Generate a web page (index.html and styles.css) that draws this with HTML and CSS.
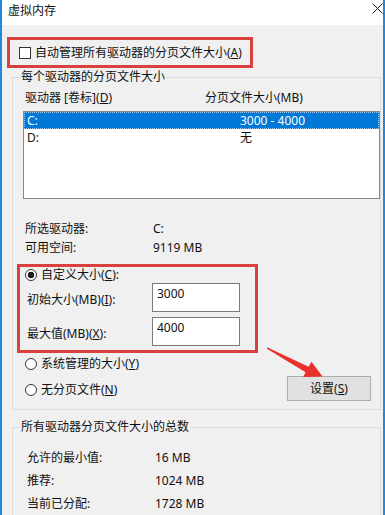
FILE: index.html
```html
<!DOCTYPE html>
<html lang="zh-CN">
<head>
<meta charset="utf-8">
<title>虚拟内存</title>
<link rel="stylesheet" href="styles.css">
</head>
<body>
<div class="window">
  <div class="titlebar">
    <span class="title">虚拟内存</span>
    <svg class="close" width="11" height="11" viewBox="0 0 11 11"><path d="M0.5 0.5L10.5 10.5M10.5 0.5L0.5 10.5" stroke="#1a1a1a" stroke-width="1" fill="none"/></svg>
  </div>
  <div class="body">
    <div class="auto-box">
      <span class="checkbox"></span>
      <span>自动管理所有驱动器的分页文件大小(<u>A</u>)</span>
    </div>

    <fieldset class="group group1">
      <legend>每个驱动器的分页文件大小</legend>
      <div class="cols">
        <span class="col-drive">驱动器 [卷标](<u>D</u>)</span>
        <span class="col-size">分页文件大小(MB)</span>
      </div>
      <div class="listbox">
        <div class="row selected"><span class="cell-drive">C:</span><span>3000 - 4000</span></div>
        <div class="row"><span class="cell-drive">D:</span><span>无</span></div>
      </div>
      <div class="info">
        <div class="info-row"><span class="key">所选驱动器:</span><span>C:</span></div>
        <div class="info-row"><span class="key">可用空间:</span><span>9119 MB</span></div>
      </div>
      <div class="custom-box">
        <div class="radio-row first"><span class="radio checked"></span><span>自定义大小(<u>C</u>):</span></div>
        <div class="field-row"><span class="field-label">初始大小(MB)(<u>I</u>):</span><span class="input">3000</span></div>
        <div class="field-row second"><span class="field-label">最大值(MB)(<u>X</u>):</span><span class="input">4000</span></div>
      </div>
      <div class="bottom-row">
        <div class="radios">
          <div class="radio-row"><span class="radio"></span><span>系统管理的大小(<u>Y</u>)</span></div>
          <div class="radio-row"><span class="radio"></span><span>无分页文件(<u>N</u>)</span></div>
        </div>
        <button class="btn">设置(<u>S</u>)</button>
      </div>
    </fieldset>

    <fieldset class="group group2">
      <legend>所有驱动器分页文件大小的总数</legend>
      <div class="totals">
        <div class="total-row"><span class="key">允许的最小值:</span><span>16 MB</span></div>
        <div class="total-row"><span class="key">推荐:</span><span>1024 MB</span></div>
        <div class="total-row"><span class="key">当前已分配:</span><span>1728 MB</span></div>
      </div>
    </fieldset>
  </div>
  <svg class="arrow" width="385" height="515" viewBox="0 0 385 515">
    <polygon points="267,347.3 308.6,366.8 311.5,361.8 322.5,376.5 303.2,377 305.6,372.2 267,348.7" fill="#e8302c"/>
  </svg>
</div>
</body>
</html>
```

FILE: styles.css
```css
html, body {
  margin: 0;
  padding: 0;
  background: #ffffff;
}

.window {
  position: relative;
  width: 385px;
  height: 515px;
  box-sizing: border-box;
  border-left: 2px solid #2188dc;
  border-right: 2px solid #2188dc;
  background: #f0f0f0;
  overflow: hidden;
  font-family: "Noto Sans", "Noto Sans CJK SC", sans-serif;
  font-size: 12px;
  color: #111;
}

.titlebar {
  display: flex;
  height: 25px;
  background: #ffffff;
}

.title {
  padding-left: 6px;
  line-height: 22px;
  font-size: 12px;
  color: #111;
}

.close {
  margin-left: auto;
  margin-top: 3px;
  display: block;
}

.body {
  display: flex;
  flex-direction: column;
}

.auto-box {
  margin: 12px 0 0 5px;
  width: 246px;
  height: 31px;
  box-sizing: border-box;
  border: 3px solid #d8413e;
  padding-left: 9px;
  display: flex;
  align-items: center;
  gap: 4px;
  line-height: 16px;
}

.checkbox {
  width: 12px;
  height: 12px;
  box-sizing: border-box;
  border: 1px solid #333;
  background: #fff;
  flex: none;
}

.group {
  margin: 0 2px 0 10px;
  border: 1px solid #dcdcdc;
  padding: 0 0 8px 4px;
  min-width: 0;
  box-sizing: border-box;
}

.group legend {
  margin-left: 3px;
  padding: 0 1px;
  line-height: 16px;
  font-size: 12px;
}

.group1 {
  margin-top: 1px;
}

.cols {
  display: flex;
  height: 16px;
  line-height: 16px;
  margin: 5px 0 0 8px;
}

.col-drive {
  width: 180px;
}

.listbox {
  margin: 5px 0 0 6px;
  height: 88px;
  box-sizing: border-box;
  border: 1px solid #828790;
  background: #fff;
}

.row {
  display: flex;
  height: 17px;
  line-height: 17px;
  padding-left: 3px;
  box-sizing: border-box;
}

.row.selected {
  background: #0078d7;
  color: #fff;
  outline: 1px dotted #9cc8f0;
  outline-offset: -1px;
}

.cell-drive {
  width: 213px;
}

.info {
  margin: 20px 0 0 8px;
}

.info-row {
  display: flex;
  height: 19px;
  line-height: 19px;
}

.key {
  width: 128px;
}

.custom-box {
  margin-top: 7px;
  width: 241px;
  box-sizing: border-box;
  border: 3px solid #d8413e;
  padding: 0 0 4px 5px;
}

.radio-row {
  display: flex;
  align-items: center;
  gap: 4px;
  height: 18px;
  line-height: 18px;
}

.radio-row.first {
  height: 15px;
  line-height: 15px;
}

.radio {
  width: 12px;
  height: 12px;
  box-sizing: border-box;
  border: 1px solid #333;
  border-radius: 50%;
  background: #fff;
  flex: none;
}

.radio.checked {
  background: radial-gradient(circle, #1a1a1a 0, #1a1a1a 3px, #fff 3.6px);
}

.field-row {
  display: flex;
  align-items: center;
  margin-top: 1px;
  padding-left: 2px;
}

.field-row.second {
  margin-top: 5px;
}

.field-label {
  width: 125px;
  padding-top: 2px;
}

.input {
  width: 88px;
  height: 29px;
  box-sizing: border-box;
  border: 1px solid #7a7a7a;
  background: #fff;
  padding: 2px 4px;
  line-height: 16px;
}

.bottom-row {
  display: flex;
  align-items: flex-start;
  margin-top: 2px;
}

.radios {
  display: flex;
  flex-direction: column;
  gap: 8px;
  margin-left: 8px;
}

.btn {
  margin: 21px 9px 0 auto;
  width: 84px;
  height: 25px;
  box-sizing: border-box;
  border: 1px solid #adadad;
  background: #e1e1e1;
  font-family: "Noto Sans", "Noto Sans CJK SC", sans-serif;
  font-size: 12px;
  color: #111;
  padding: 0;
  line-height: 22px;
}

.group2 {
  margin-top: 9px;
  padding-bottom: 10px;
}

.totals {
  margin: 11px 0 0 10px;
}

.total-row {
  display: flex;
  height: 23px;
  line-height: 23px;
}

.arrow {
  position: absolute;
  left: -2px;
  top: 0;
  pointer-events: none;
}
```
